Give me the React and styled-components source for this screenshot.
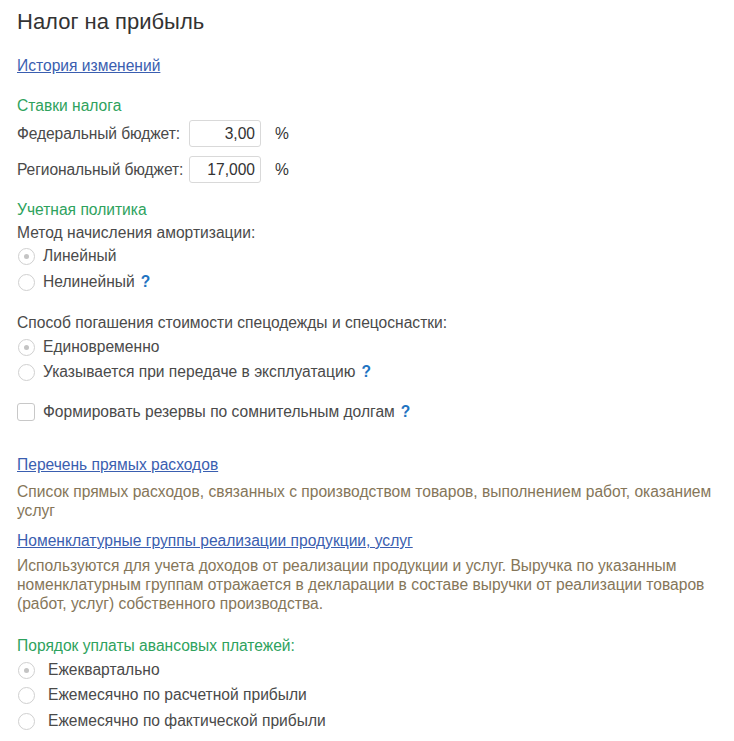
import React from "react";
import styled, { createGlobalStyle } from "styled-components";

const GlobalStyle = createGlobalStyle`
  html, body {
    margin: 0;
    padding: 0;
    background: #ffffff;
  }
  body {
    font-family: "Liberation Sans", Arial, sans-serif;
    color: #4a4a4a;
  }
`;

const Page = styled.div`
  display: flex;
  flex-direction: column;
  padding: 9px 17px 0 17px;
  width: 734px;
  box-sizing: border-box;
  font-size: 15.6px;
`;

const Title = styled.h1`
  margin: 0;
  font-size: 22px;
  font-weight: normal;
  color: #333333;
  line-height: 26px;
`;

const Link = styled.a`
  color: #3a5eb0;
  text-decoration: underline;
  line-height: 18px;
  cursor: pointer;
  align-self: flex-start;
  margin-top: ${(p) => p.$top || 0}px;
`;

const GroupTitle = styled.div`
  color: #2ea25d;
  line-height: 18px;
  margin-top: ${(p) => p.$top || 0}px;
`;

const Label = styled.div`
  line-height: 18px;
  margin-top: ${(p) => p.$top || 0}px;
`;

const FieldRow = styled.div`
  display: flex;
  align-items: center;
  height: 27px;
  margin-top: ${(p) => p.$top || 0}px;
`;

const FieldLabel = styled.span`
  width: 172px;
  flex: none;
  letter-spacing: -0.1px;
`;

const NumberBox = styled.div`
  width: 72px;
  height: 27px;
  box-sizing: border-box;
  border: 1px solid #d9d9d9;
  border-radius: 3px;
  display: flex;
  align-items: center;
  justify-content: flex-end;
  padding-right: 5px;
  color: #333;
`;

const Unit = styled.span`
  margin-left: 14px;
  color: #333;
`;

const OptionRow = styled.label`
  display: flex;
  align-items: center;
  height: 18px;
  line-height: 18px;
  margin-top: ${(p) => p.$top || 0}px;
  gap: ${(p) => p.$gap || 8}px;
`;

const RadioMark = styled.span`
  width: 17px;
  height: 17px;
  box-sizing: border-box;
  border: 1px solid #d0d0d0;
  border-radius: 50%;
  flex: none;
  display: flex;
  align-items: center;
  justify-content: center;
  margin-left: 1px;

  &::after {
    content: "";
    width: 5px;
    height: 5px;
    border-radius: 50%;
    background: ${(p) => (p.$checked ? "#c4c4c4" : "transparent")};
  }
`;

const CheckMark = styled.span`
  width: 18px;
  height: 18px;
  box-sizing: border-box;
  border: 1px solid #c8c8c8;
  border-radius: 3px;
  flex: none;
`;

const Help = styled.span`
  color: #1f74c2;
  font-weight: bold;
  margin-left: 6px;
`;

const Note = styled.div`
  color: #857659;
  line-height: 19px;
  margin-top: ${(p) => p.$top || 0}px;
  padding-right: 4px;
`;

const Radio = ({ checked, children, help, top, gap }) => (
  <OptionRow $top={top} $gap={gap}>
    <RadioMark $checked={checked} />
    <span>
      {children}
      {help && <Help>?</Help>}
    </span>
  </OptionRow>
);

export default function App() {
  return (
    <Page>
      <GlobalStyle />
      <Title>Налог на прибыль</Title>
      <Link $top={22}>История изменений</Link>

      <GroupTitle $top={22}>Ставки налога</GroupTitle>
      <FieldRow $top={5}>
        <FieldLabel>Федеральный бюджет:</FieldLabel>
        <NumberBox>3,00</NumberBox>
        <Unit>%</Unit>
      </FieldRow>
      <FieldRow $top={9}>
        <FieldLabel>Региональный бюджет:</FieldLabel>
        <NumberBox>17,000</NumberBox>
        <Unit>%</Unit>
      </FieldRow>

      <GroupTitle $top={18}>Учетная политика</GroupTitle>
      <Label $top={5}>Метод начисления амортизации:</Label>
      <Radio checked top={5}>Линейный</Radio>
      <Radio help top={8}>Нелинейный</Radio>

      <Label $top={23}>Способ погашения стоимости спецодежды и спецоснастки:</Label>
      <Radio checked top={6}>Единовременно</Radio>
      <Radio help top={7}>Указывается при передаче в эксплуатацию</Radio>

      <OptionRow $top={22}>
        <CheckMark />
        <span>
          Формировать резервы по сомнительным долгам<Help>?</Help>
        </span>
      </OptionRow>

      <Link $top={35}>Перечень прямых расходов</Link>
      <Note $top={8}>
        Список прямых расходов, связанных с производством товаров, выполнением работ, оказанием услуг
      </Note>
      <Link $top={12}>Номенклатурные группы реализации продукции, услуг</Link>
      <Note $top={6}>
        Используются для учета доходов от реализации продукции и услуг. Выручка по указанным
        номенклатурным группам отражается в декларации в составе выручки от реализации товаров
        (работ, услуг) собственного производства.
      </Note>

      <GroupTitle $top={24}>Порядок уплаты авансовых платежей:</GroupTitle>
      <Radio checked top={6} gap={13}>Ежеквартально</Radio>
      <Radio top={7} gap={13}>Ежемесячно по расчетной прибыли</Radio>
      <Radio top={8} gap={13}>Ежемесячно по фактической прибыли</Radio>
    </Page>
  );
}
